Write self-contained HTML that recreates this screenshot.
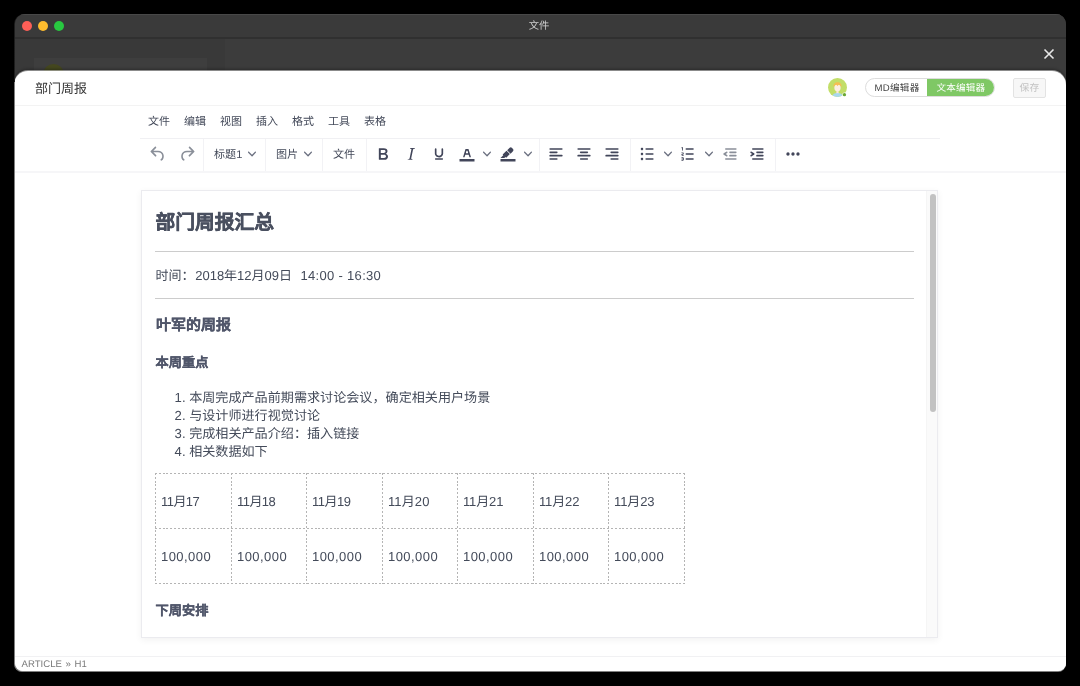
<!DOCTYPE html>
<html lang="zh-CN"><head><meta charset="utf-8">
<style>
*{box-sizing:border-box;margin:0;padding:0}
html,body{width:1080px;height:686px;background:#000;overflow:hidden;font-family:"Liberation Sans",sans-serif;text-rendering:geometricPrecision}
#ghost{position:absolute;left:14px;top:14px;width:1052px;height:658px;border-radius:10px 10px 8px 8px;opacity:.5;background:linear-gradient(#3a3a3a 0 25px,#3b3b3b 25px 68px,#fff 68px)}
#in{position:absolute;left:-1px;top:0;width:1052px;height:658px}
#win{position:absolute;left:15px;top:14px;width:1051px;height:657px;background:#3c3c3c;border-radius:10px 10px 8px 8px;overflow:hidden;will-change:transform}
#tb{position:absolute;left:0;top:0;width:100%;height:25px;background:#3a3a3a;border-bottom:2px solid #303030;box-shadow:inset 0 1px 0 #484848}
#side{position:absolute;left:0;top:25px;width:211px;height:40px;background:#393939}
#side i{position:absolute;left:20px;top:19px;width:173px;height:20px;background:#3e3e3e}
#side b{position:absolute;left:29px;top:25px;width:21px;height:21px;border-radius:50%;background:#44471f}
#tb .t{position:absolute;left:0;right:2px;top:6px;text-align:center;color:#d0d0d0;font-size:10.3px;line-height:14px}
.dot{position:absolute;top:7px;width:10px;height:10px;border-radius:50%}
#x{position:absolute;left:1029px;top:34px;width:12px;height:12px}
#panel{position:absolute;left:0;top:57px;width:1052px;height:601px;background:#fff;border-radius:14px 14px 0 0;overflow:hidden;box-shadow:0 -1px 0 rgba(255,255,255,.45),0 -2px 3px rgba(0,0,0,.3)}
#hdr{position:absolute;left:0;top:0;width:100%;height:35px;border-bottom:1px solid #f3f3f3}
#hdr .title{position:absolute;left:21px;top:10px;font-size:13px;color:#333;line-height:16px}
#menu{position:absolute;left:126px;top:35px;width:800px;height:33px;border-bottom:1px solid #f0f0f3}
#menu span{position:absolute;top:9px;font-size:11px;color:#444a5a;line-height:14px}
#tools{position:absolute;left:126px;top:68px;width:800px;height:33px}
#tline{position:absolute;left:0;top:100px;width:100%;height:2px;background:#f6f6f8}
#bg{position:absolute;left:0;top:102px;width:100%;height:484px;background:#fff}
#doc{position:absolute;left:127px;top:119px;width:797px;height:448px;background:#fff;box-shadow:inset 0 0 0 1px #ebebef,0 2px 7px rgba(0,0,0,.055);overflow:hidden}
#status{position:absolute;left:0;top:585px;width:100%;height:16px;background:#fff;border-top:1px solid #f1f1f3;font-size:9.6px;color:#7a7a7a;line-height:15px;padding-left:7.6px;word-spacing:1px}
.ic{position:absolute}
.sep{position:absolute;top:0;width:1px;height:33px;background:#f2f2f5}
.tt{position:absolute;top:9.2px;font-size:11.1px;color:#444a5a;line-height:14px}

#doc *{position:absolute;white-space:nowrap;color:#444b5a}
#doc h1{left:14.4px;top:19.9px;font-size:19.8px;line-height:26px;font-weight:bold;color:#4a5060;-webkit-text-stroke:.4px #4a5060}
#doc .hr{left:14px;width:759px;height:1px;background:#ccc}
#doc .p{left:14px;font-size:13px;line-height:18px}
#doc h2{left:15px;top:126.7px;font-size:15px;line-height:18px;font-weight:bold;color:#50566a;-webkit-text-stroke:.2px #50566a}
#doc h3{left:14.6px;font-size:13.2px;line-height:16px;font-weight:bold;color:#50566a;-webkit-text-stroke:.2px #50566a}
#doc .li{left:33.6px;font-size:13.1px;line-height:18px}
#tbl{left:14px;top:283px;width:530px;height:111px}
#tbl .h{left:0;width:530px;height:1px;background:repeating-linear-gradient(90deg,#b4b4b4 0 2px,transparent 2px 3.8px)}
#tbl .v{top:0;width:1px;height:111px;background:repeating-linear-gradient(180deg,#b4b4b4 0 2px,transparent 2px 3.8px)}
#tbl .c{font-size:13px;line-height:16px;font-style:normal}
#sb{left:785px;top:1px;width:11px;height:446px;background:#fafafa;border-left:1px solid #f5f5f5}
#th{left:788.6px;top:3.5px;width:6.6px;height:218.5px;border-radius:3.3px;background:#c2c2c2}

#av{position:absolute;left:813.6px;top:7.4px;width:19px;height:19px}
#tog{position:absolute;left:851px;top:7px;width:130px;height:19px;border-radius:10px;border:1px solid #ddd;background:#fff;overflow:hidden;font-size:9.6px;line-height:17px;color:#444}
#tog .r{position:absolute;left:61px;top:-1px;width:69px;height:19px;background:#7fc865;color:#fff;padding-left:9.6px;line-height:21px;letter-spacing:.15px}
#tog .l{position:absolute;left:8.6px;top:1px}
#save{position:absolute;left:999px;top:7px;width:32.5px;height:19.5px;border:1px solid #e3e3e3;border-radius:2px;background:#f7f7f7;color:#c3c3c3;font-size:9.8px;line-height:19px;padding-left:5.6px}
</style></head><body>
<div id="ghost"></div>
<div id="win"><div id="in">
 <div id="tb"><div class="dot" style="left:8px;background:#fe5f57"></div><div class="dot" style="left:24px;background:#febc2e"></div><div class="dot" style="left:40px;background:#28c840"></div><div class="t">文件</div></div>
 <div id="side"><i></i><b></b></div>
 <svg id="x" viewBox="0 0 12 12"><path d="M1.5 1.5L10.5 10.5M10.5 1.5L1.5 10.5" stroke="#e8e8e8" stroke-width="1.6" fill="none"/></svg>
 <div id="panel">
  <div id="hdr"><div class="title">部门周报</div><svg id="av" viewBox="0 0 20 20"><defs><clipPath id="avc"><circle cx="10" cy="10" r="10"/></clipPath></defs><g clip-path="url(#avc)"><rect width="20" height="20" fill="#c2de68"/><path d="M4.500 20c0-3.200 2.500-4.200 5.500-4.200s5.500 1 5.500 4.200z" fill="#a9d8ee"/><rect x="8.800" y="13" width="2.400" height="3" fill="#fbe6d6"/><ellipse cx="10" cy="10.300" rx="3.300" ry="3.700" fill="#fdeee2"/><path d="M5.800 9.800c-.6-3.800 1.900-5.400 4.200-5.400 2.500 0 4.800 1.600 4.200 5.400-.6-1.800-1.700-2.600-3-2.800l-1.200 1.500-1.200-1.500c-1.300.2-2.400 1-3 2.800z" fill="#f6bd52"/></g><circle cx="17.300" cy="17.500" r="2.300" fill="#fff"/><circle cx="17.300" cy="17.500" r="1.750" fill="#6aa834"/></svg><div id="tog"><span class="l" style="letter-spacing:.25px">MD编辑器</span><span class="r">文本编辑器</span></div><div id="save">保存</div></div>
  <div id="menu"><span style="left:8px">文件</span><span style="left:44px">编辑</span><span style="left:80px">视图</span><span style="left:116px">插入</span><span style="left:152px">格式</span><span style="left:188px">工具</span><span style="left:224px">表格</span></div>
  <div id="tools">
<svg class="ic" style="left:8.2px;top:5px" width="20" height="20" viewBox="0 0 24 24"><path fill="#8a8f99" d="M6.4 8H12c3.700 0 6.200 2 6.800 5.100.6 2.700-.4 5.600-2.300 6.800a1 1 0 01-1-1.800c1.100-.6 1.800-2.700 1.400-4.600-.5-2.100-2.100-3.500-4.900-3.500H6.400l3.300 3.300a1 1 0 11-1.400 1.400l-5-5a1 1 0 010-1.400l5-5a1 1 0 011.400 1.400L6.400 8z"/></svg>
<svg class="ic" style="left:36.8px;top:5px" width="20" height="20" viewBox="0 0 24 24"><path fill="#8a8f99" d="M17.600 8H12c-3.700 0-6.200 2-6.800 5.100-.6 2.700.4 5.600 2.300 6.800a1 1 0 001-1.800c-1.100-.6-1.800-2.700-1.400-4.600.5-2.100 2.100-3.500 4.900-3.500h5.600l-3.300 3.300a1 1 0 101.400 1.400l5-5a1 1 0 000-1.400l-5-5a1 1 0 00-1.400 1.400L17.600 8z"/></svg>
<svg class="ic" style="left:233px;top:5px" width="20" height="20" viewBox="0 0 24 24"><path fill="#42465a" d="M7.800 19c-.3 0-.5 0-.6-.2l-.2-.5V5.700c0-.2 0-.4.200-.5l.6-.2h5c1.500 0 2.700.3 3.500 1 .7.600 1.100 1.400 1.100 2.500a3 3 0 01-.6 1.900c-.4.600-1 1-1.600 1.200.4.100.9.300 1.300.6s.8.700 1 1.200c.4.400.5 1 .5 1.600 0 1.300-.4 2.300-1.300 3-.8.700-2.100 1-3.800 1H7.800zm5-8.300c.6 0 1.200-.1 1.600-.5.400-.3.600-.7.600-1.300 0-1.100-.8-1.700-2.300-1.700H9.300v3.500h3.400zm.5 6c.7 0 1.300-.1 1.700-.4.400-.4.600-.9.600-1.500s-.2-1-.7-1.400c-.4-.3-1-.4-2-.4H9.400v3.800h4z"/></svg>
<svg class="ic" style="left:261px;top:5px" width="20" height="20" viewBox="0 0 24 24"><path fill="#42465a" d="M16.700 4.700l-.1.900h-.3c-.6 0-1 0-1.400.3-.3.300-.4.600-.5 1.100l-2.100 9.800v.6c0 .5.400.8 1.400.8h.2l-.2.800H8l.2-.8h.2c1.100 0 1.800-.5 2-1.500l2-9.800.1-.5c0-.6-.4-.8-1.400-.8h-.3l.2-.9h5.800z"/></svg>
<svg class="ic" style="left:288.8px;top:5px" width="20" height="20" viewBox="0 0 24 24"><path fill="#42465a" d="M16 5c.6 0 1 .4 1 1v5.500a4 4 0 01-.4 1.800l-1 1.400a5.300 5.300 0 01-5.500 1 5 5 0 01-1.600-1c-.5-.4-.8-.9-1.100-1.400a4 4 0 01-.4-1.800V6c0-.6.400-1 1-1s1 .4 1 1v5.500c0 .3 0 .6.200 1l.6.700a3.300 3.300 0 002.200.8 3.400 3.400 0 002.200-.8c.3-.2.400-.5.600-.8l.2-.9V6c0-.6.400-1 1-1zM8 17h8c.6 0 1 .4 1 1s-.4 1-1 1H8a1 1 0 010-2z"/></svg>
<svg class="ic" style="left:316.8px;top:5px" width="20" height="20" viewBox="0 0 24 24"><path fill="#42465a" d="M3 18h18v3H3zM8.700 16h-.8a.5.5 0 01-.5-.6l2.700-9c.1-.3.300-.4.500-.4h2.800c.2 0 .4.100.5.400l2.700 9a.5.5 0 01-.5.600h-.8a.5.5 0 01-.4-.4l-.7-2.200c0-.3-.3-.4-.5-.4h-3.400c-.2 0-.4.100-.5.400l-.7 2.200c0 .3-.2.400-.4.400zm2.600-7.600l-.6 2a.5.5 0 00.5.600h1.600a.5.5 0 00.5-.6l-.6-2c0-.3-.3-.4-.5-.4h-.4c-.2 0-.4.100-.5.400z"/></svg>
<svg class="ic" style="left:358px;top:5px" width="20" height="20" viewBox="0 0 24 24"><path fill="#42465a" d="M3 18h18v3H3zM7.700 16.700H3l3.300-3.300-.7-.8L10.200 8l4 4.100-4 4.200c-.2.200-.6.200-.8 0l-.6-.7-1.100 1.100zm5-7.500L11 7.400l3-2.900a2 2 0 012.600 0L18 6c.7.700.7 2 0 2.700l-2.900 2.900-1.800-1.800-.5-.6"/></svg>
<svg class="ic" style="left:406px;top:5px" width="20" height="20" viewBox="0 0 24 24"><path fill="#42465a" d="M5 5h14c.6 0 1 .4 1 1s-.4 1-1 1H5a1 1 0 110-2zm0 4h8c.6 0 1 .4 1 1s-.4 1-1 1H5a1 1 0 110-2zm0 8h8c.6 0 1 .4 1 1s-.4 1-1 1H5a1 1 0 010-2zm0-4h14c.6 0 1 .4 1 1s-.4 1-1 1H5a1 1 0 010-2z"/></svg>
<svg class="ic" style="left:434px;top:5px" width="20" height="20" viewBox="0 0 24 24"><path fill="#42465a" d="M5 5h14c.6 0 1 .4 1 1s-.4 1-1 1H5a1 1 0 110-2zm3 4h8c.6 0 1 .4 1 1s-.4 1-1 1H8a1 1 0 110-2zm0 8h8c.6 0 1 .4 1 1s-.4 1-1 1H8a1 1 0 010-2zm-3-4h14c.6 0 1 .4 1 1s-.4 1-1 1H5a1 1 0 010-2z"/></svg>
<svg class="ic" style="left:462px;top:5px" width="20" height="20" viewBox="0 0 24 24"><path fill="#42465a" d="M5 5h14c.6 0 1 .4 1 1s-.4 1-1 1H5a1 1 0 110-2zm6 4h8c.6 0 1 .4 1 1s-.4 1-1 1h-8a1 1 0 010-2zm0 8h8c.6 0 1 .4 1 1s-.4 1-1 1h-8a1 1 0 010-2zm-6-4h14c.6 0 1 .4 1 1s-.4 1-1 1H5a1 1 0 010-2z"/></svg>
<svg class="ic" style="left:497px;top:5px" width="20" height="20" viewBox="0 0 24 24"><path fill="#42465a" d="M11 5h8c.6 0 1 .4 1 1s-.4 1-1 1h-8a1 1 0 010-2zm0 6h8c.6 0 1 .4 1 1s-.4 1-1 1h-8a1 1 0 010-2zm0 6h8c.6 0 1 .4 1 1s-.4 1-1 1h-8a1 1 0 010-2zM4.500 6c0-.8.700-1.500 1.500-1.500s1.500.7 1.500 1.500S6.800 7.500 6 7.500 4.500 6.800 4.500 6zm0 6c0-.8.700-1.500 1.500-1.500s1.500.7 1.500 1.500-.7 1.500-1.500 1.500-1.500-.7-1.500-1.500zm0 6c0-.8.700-1.500 1.500-1.500s1.500.7 1.500 1.500-.7 1.500-1.500 1.500-1.500-.7-1.500-1.500z"/></svg>
<svg class="ic" style="left:538px;top:5px" width="20" height="20" viewBox="0 0 24 24"><path fill="#42465a" d="M10 17h8c.6 0 1 .4 1 1s-.4 1-1 1h-8a1 1 0 010-2zm0-6h8c.6 0 1 .4 1 1s-.4 1-1 1h-8a1 1 0 010-2zm0-6h8c.6 0 1 .4 1 1s-.4 1-1 1h-8a1 1 0 110-2zM6 4v3.500c0 .3-.2.500-.5.500a.5.5 0 01-.5-.5V5h-.5a.5.5 0 010-1H6zm-1 8.800l.2.200h1.300c.3 0 .5.200.5.500s-.2.500-.5.500H4.900a1 1 0 01-.9-1V13c0-.4.300-.8.600-1l1.200-.4.200-.3a.2.2 0 00-.2-.2H4.500a.5.5 0 01-.5-.5c0-.3.200-.5.500-.5h1.600c.5 0 .9.400.9 1v.1c0 .4-.3.800-.6 1l-1.200.4-.2.300zM7 17v2c0 .6-.4 1-1 1H4.500a.5.5 0 010-1h1.200c.2 0 .3-.1.300-.3 0-.2-.1-.3-.3-.3H4.400a.4.4 0 110-.8h1.300c.2 0 .3-.1.300-.3 0-.2-.1-.3-.3-.3H4.500a.5.5 0 110-1H6c.6 0 1 .4 1 1z"/></svg>
<svg class="ic" style="left:580px;top:5px" width="20" height="20" viewBox="0 0 24 24"><path fill="#8a8f99" d="M7 5h12c.6 0 1 .4 1 1s-.4 1-1 1H7a1 1 0 110-2zm5 4h7c.6 0 1 .4 1 1s-.4 1-1 1h-7a1 1 0 010-2zm0 4h7c.6 0 1 .4 1 1s-.4 1-1 1h-7a1 1 0 010-2zm-5 4h12a1 1 0 010 2H7a1 1 0 010-2zm1.600-3.800a1 1 0 01-1.200 1.600l-3-2a1 1 0 010-1.600l3-2a1 1 0 011.200 1.600L6.800 12l1.800 1.200z"/></svg>
<svg class="ic" style="left:607px;top:5px" width="20" height="20" viewBox="0 0 24 24"><path fill="#42465a" d="M7 5h12c.6 0 1 .4 1 1s-.4 1-1 1H7a1 1 0 110-2zm5 4h7c.6 0 1 .4 1 1s-.4 1-1 1h-7a1 1 0 010-2zm0 4h7c.6 0 1 .4 1 1s-.4 1-1 1h-7a1 1 0 010-2zm-5 4h12a1 1 0 010 2H7a1 1 0 010-2zm-2.600-3.800L6.200 12l-1.800-1.200a1 1 0 011.200-1.600l3 2a1 1 0 010 1.600l-3 2a1 1 0 11-1.200-1.600z"/></svg>
<svg class="ic" style="left:643px;top:5px" width="20" height="20" viewBox="0 0 24 24"><path fill="#42465a" d="M6 10a2 2 0 00-2 2c0 1.100.9 2 2 2a2 2 0 002-2 2 2 0 00-2-2zm12 0a2 2 0 00-2 2c0 1.100.9 2 2 2a2 2 0 002-2 2 2 0 00-2-2zm-6 0a2 2 0 00-2 2c0 1.100.9 2 2 2a2 2 0 002-2 2 2 0 00-2-2z"/></svg>
<svg class="ic" style="left:108px;top:11px" width="8" height="8" viewBox="0 0 10 10"><path fill="#6b7080" d="M8.700 2.200c.3-.3.800-.3 1 0 .4.400.4.900 0 1.200L5.700 7.800c-.3.300-.9.300-1.200 0L.2 3.400a.8.8 0 010-1.200c.3-.3.800-.3 1.100 0L5 6l3.700-3.800z"/></svg>
<svg class="ic" style="left:164px;top:11px" width="8" height="8" viewBox="0 0 10 10"><path fill="#6b7080" d="M8.700 2.200c.3-.3.800-.3 1 0 .4.400.4.900 0 1.200L5.700 7.800c-.3.300-.9.300-1.200 0L.2 3.400a.8.8 0 010-1.200c.3-.3.800-.3 1.100 0L5 6l3.700-3.800z"/></svg>
<svg class="ic" style="left:343px;top:11px" width="8" height="8" viewBox="0 0 10 10"><path fill="#6b7080" d="M8.700 2.200c.3-.3.800-.3 1 0 .4.400.4.900 0 1.200L5.700 7.800c-.3.300-.9.300-1.200 0L.2 3.400a.8.8 0 010-1.200c.3-.3.800-.3 1.100 0L5 6l3.700-3.800z"/></svg>
<svg class="ic" style="left:384px;top:11px" width="8" height="8" viewBox="0 0 10 10"><path fill="#6b7080" d="M8.700 2.200c.3-.3.800-.3 1 0 .4.400.4.900 0 1.200L5.700 7.800c-.3.300-.9.300-1.200 0L.2 3.400a.8.8 0 010-1.200c.3-.3.800-.3 1.100 0L5 6l3.700-3.800z"/></svg>
<svg class="ic" style="left:524px;top:11px" width="8" height="8" viewBox="0 0 10 10"><path fill="#6b7080" d="M8.700 2.200c.3-.3.800-.3 1 0 .4.400.4.900 0 1.200L5.700 7.800c-.3.300-.9.300-1.200 0L.2 3.400a.8.8 0 010-1.200c.3-.3.800-.3 1.100 0L5 6l3.700-3.800z"/></svg>
<svg class="ic" style="left:565px;top:11px" width="8" height="8" viewBox="0 0 10 10"><path fill="#6b7080" d="M8.700 2.200c.3-.3.800-.3 1 0 .4.400.4.900 0 1.200L5.700 7.800c-.3.300-.9.300-1.200 0L.2 3.400a.8.8 0 010-1.200c.3-.3.800-.3 1.100 0L5 6l3.700-3.800z"/></svg>
<div class="sep" style="left:63px"></div>
<div class="sep" style="left:125px"></div>
<div class="sep" style="left:182px"></div>
<div class="sep" style="left:226px"></div>
<div class="sep" style="left:399px"></div>
<div class="sep" style="left:490px"></div>
<div class="sep" style="left:635px"></div>
<span class="tt" style="left:74px">标题1</span>
<span class="tt" style="left:136px">图片</span>
<span class="tt" style="left:193px">文件</span>
</div>
  <div id="tline"></div>
  <div id="bg"></div>
  <div id="doc">
<h1>部门周报汇总</h1>
<div class="hr" style="top:61px"></div>
<div class="p" style="top:77px;left:14.6px">时间：</div><div class="p" style="top:77px;left:54.2px">2018年12月09日</div><div class="p" style="top:77px;left:159.4px;letter-spacing:.32px">14:00 - 16:30</div>
<div class="hr" style="top:108px"></div>
<h2>叶军的周报</h2>
<h3 style="top:164.6px">本周重点</h3>
<div class="li" style="top:199px">1. 本周完成产品前期需求讨论会议，确定相关用户场景</div>
<div class="li" style="top:217px">2. 与设计师进行视觉讨论</div>
<div class="li" style="top:235px">3. 完成相关产品介绍：插入链接</div>
<div class="li" style="top:253px">4. 相关数据如下</div>
<div id="tbl">
<i class="h" style="top:0px"></i>
<i class="h" style="top:55px"></i>
<i class="h" style="top:110px"></i>
<i class="v" style="left:0px"></i>
<i class="v" style="left:76px"></i>
<i class="v" style="left:151px"></i>
<i class="v" style="left:227px"></i>
<i class="v" style="left:302px"></i>
<i class="v" style="left:378px"></i>
<i class="v" style="left:453px"></i>
<i class="v" style="left:529px"></i>
<i class="c" style="left:6px;top:21px;letter-spacing:-0.55px">11月17</i>
<i class="c" style="left:6px;top:76px;letter-spacing:.45px">100,000</i>
<i class="c" style="left:82px;top:21px;letter-spacing:-0.55px">11月18</i>
<i class="c" style="left:82px;top:76px;letter-spacing:.45px">100,000</i>
<i class="c" style="left:157px;top:21px;letter-spacing:-0.5px">11月19</i>
<i class="c" style="left:157px;top:76px;letter-spacing:.45px">100,000</i>
<i class="c" style="left:233px;top:21px;letter-spacing:0.1px">11月20</i>
<i class="c" style="left:233px;top:76px;letter-spacing:.45px">100,000</i>
<i class="c" style="left:308px;top:21px;letter-spacing:-0.15px">11月21</i>
<i class="c" style="left:308px;top:76px;letter-spacing:.45px">100,000</i>
<i class="c" style="left:384px;top:21px;letter-spacing:-0.15px">11月22</i>
<i class="c" style="left:384px;top:76px;letter-spacing:.45px">100,000</i>
<i class="c" style="left:459px;top:21px;letter-spacing:-0.1px">11月23</i>
<i class="c" style="left:459px;top:76px;letter-spacing:.45px">100,000</i>
</div>
<h3 style="top:413.2px">下周安排</h3>
<div id="sb"></div><div id="th"></div>
</div>
  <div id="status">ARTICLE » H1</div>
 </div>
</div></div>
</body></html>
